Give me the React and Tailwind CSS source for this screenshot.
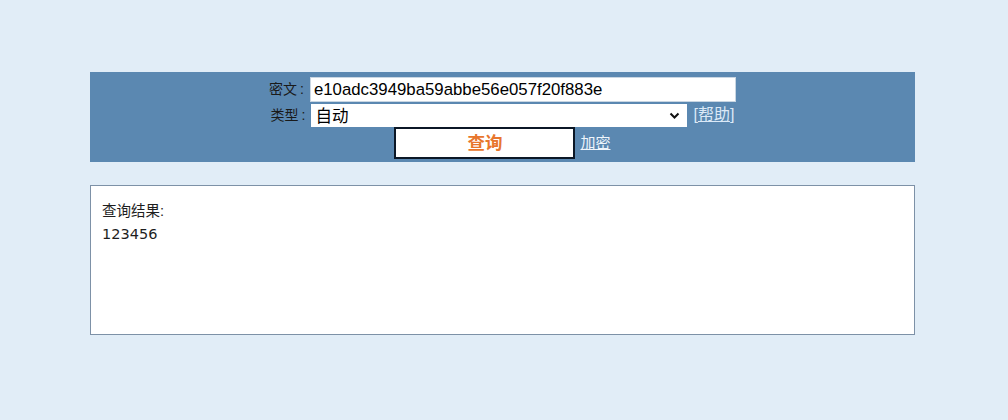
import React from "react";

export default function App() {
  const cjk = { fontFamily: '"Liberation Sans", "Noto Sans CJK SC", sans-serif' };
  return (
    <div className="min-h-screen w-full bg-[#e1edf7] pt-[72px]" style={cjk}>
      <div className="mx-[90px] w-[825px] h-[90px] bg-[#5b88b1] pt-[5px] flex flex-col items-center">
        <div className="flex items-center">
          <span className="text-[14px] text-[#1a1a1a] mr-[6px]">
            密文<span className="ml-[3px]">:</span>
          </span>
          <input
            className="w-[426px] h-[25px] bg-white border border-[#c9d6e2] px-[3px] text-[16.8px] text-black outline-none"
            style={{ fontFamily: '"Liberation Sans", Arial, sans-serif' }}
            defaultValue="e10adc3949ba59abbe56e057f20f883e"
          />
        </div>
        <div className="flex items-center mt-[1px]">
          <span className="text-[14px] text-[#1a1a1a] mr-[6px]">
            类型<span className="ml-[3px]">:</span>
          </span>
          <div className="relative w-[376px] h-[23px]">
            <select className="appearance-none w-full h-full bg-white border-0 pl-[4px] text-[16.5px] text-black outline-none">
              <option>自动</option>
            </select>
            <svg className="absolute right-[7px] top-[8px] pointer-events-none" width="11" height="8" viewBox="0 0 11 8">
              <path d="M1.5 1.5 L5.5 5.5 L9.5 1.5" fill="none" stroke="#111" strokeWidth="2" />
            </svg>
          </div>
          <span className="ml-[6px] text-[16px] text-[#dbe9f7]">
            [<span className="underline">帮助</span>]
          </span>
        </div>
        <div className="flex items-center">
          <button className="w-[181px] h-[32px] bg-white border-2 border-[#0b1726] text-[#e8762d] text-[17.5px] font-bold">
            查询
          </button>
          <span className="ml-[5px] text-[15px] text-[#eef5fc] underline">加密</span>
        </div>
      </div>
      <div className="mx-[90px] mt-[23px] w-[825px] h-[150px] bg-white border border-[#7d91a7] pt-[14px] pl-[11px] text-[#1e1e1e]">
        <div className="text-[14.5px] leading-[22px]">查询结果:</div>
        <div className="mt-[3px] text-[14.5px] leading-[18px]" style={{ fontFamily: '"DejaVu Sans", sans-serif' }}>123456</div>
      </div>
    </div>
  );
}
